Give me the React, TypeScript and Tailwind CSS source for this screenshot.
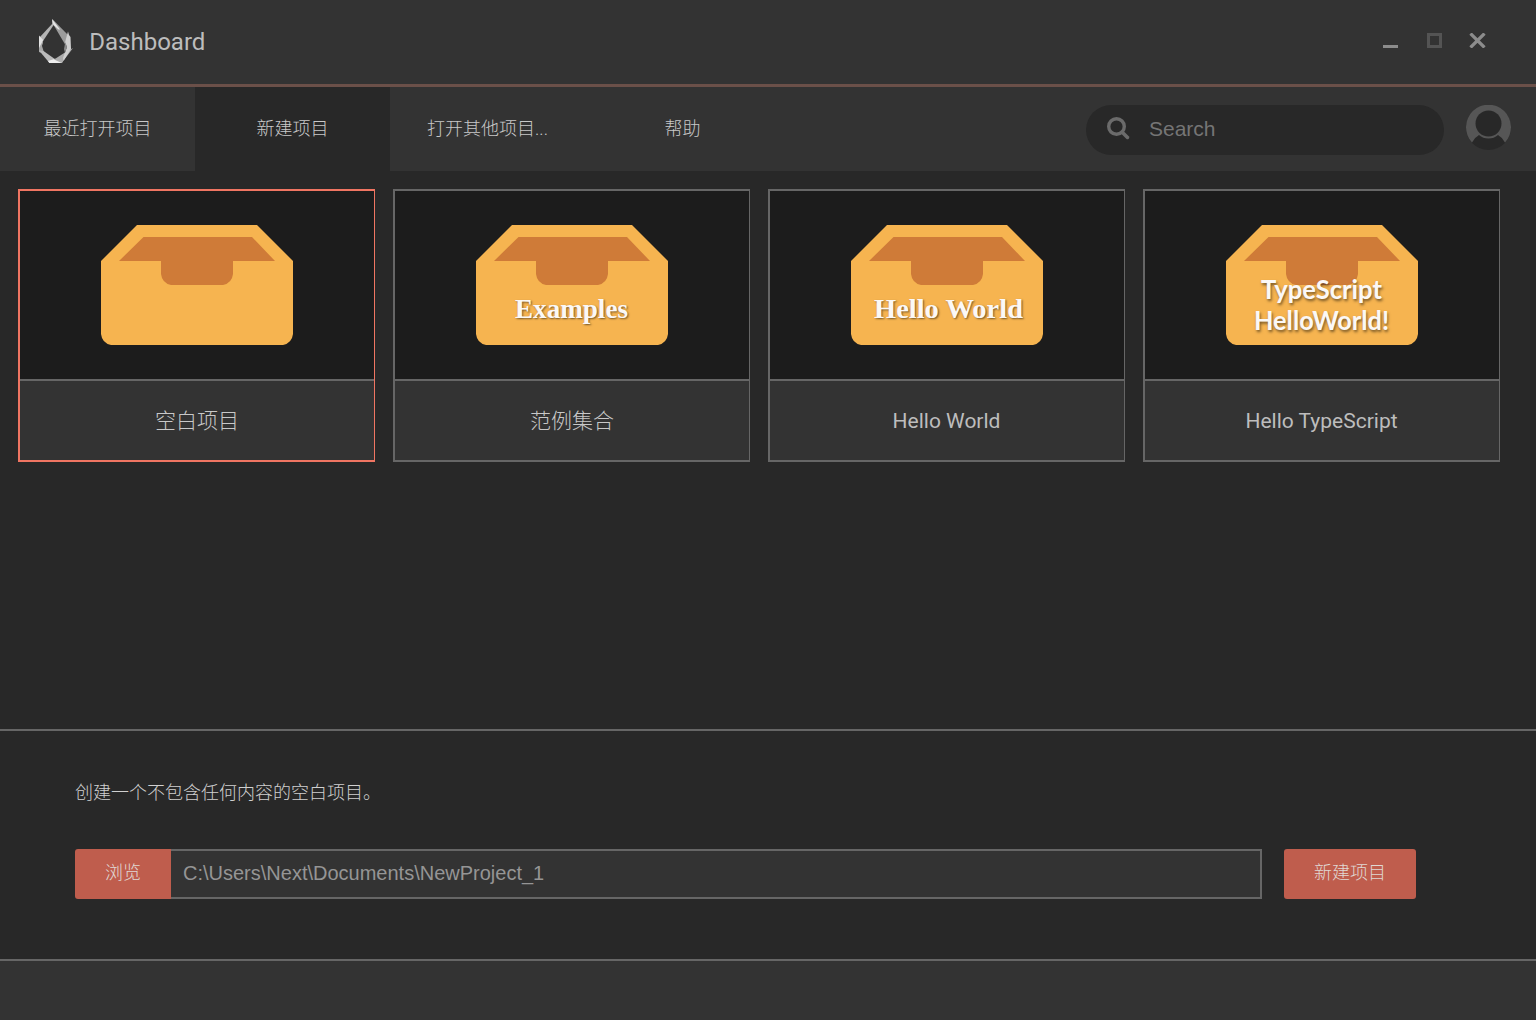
import React from "react";

type Line = { text: string; x: number; y: number; width: number };
type Template = { name: string; serif?: boolean; lines: Line[]; selected?: boolean; cjk?: boolean };

const templates: Template[] = [
  { name: "空白项目", lines: [], selected: true, cjk: true },
  { name: "范例集合", serif: true, lines: [{ text: "Examples", x: 39, y: 93, width: 113 }], cjk: true },
  { name: "Hello World", serif: true, lines: [{ text: "Hello World", x: 23, y: 93, width: 149 }] },
  {
    name: "Hello TypeScript",
    lines: [
      { text: "TypeScript", x: 35, y: 74, width: 121 },
      { text: "HelloWorld!", x: 28, y: 105, width: 135 },
    ],
  },
];

const tabs = ["最近打开项目", "新建项目", "打开其他项目...", "帮助"];

function Logo() {
  return (
    <svg className="mt-[18px] ml-[38px] h-[46px] w-9 shrink-0" viewBox="0 0 36 46">
      <path d="M14.300 1L30.500 17.500L31 24L28 28L15 6Z" fill="#9c9c9c" />
      <path d="M14 1L22 11.500L20.500 11.500L14.500 6Z" fill="#e6e6e6" />
      <path d="M15 5L15.300 7.500L5 23L1 22V20Z" fill="#b4b4b4" />
      <path d="M1 17.500L5.200 22L3.500 29L1 34Z" fill="#e2e2e2" />
      <path d="M5.200 22L4 28L6.500 36L1 34V30Z" fill="#a6a6a6" />
      <path d="M1 32.500L5.500 33L17.500 41.500L11.500 45Z" fill="#bababa" />
      <path d="M10 43L17 40.800L25 43.500L23.700 45H11.300Z" fill="#ededed" />
      <path d="M16 41.500L27 34.500L35 30L23.700 45Z" fill="#acacac" />
      <path d="M30 13.500L31 17L32.500 19L33 31L25.500 43L25 40L29 29L27 24.500Z" fill="#d0d0d0" />
      <path d="M27.300 24L29 29L27 35L26 31Z" fill="#8c8c8c" />
    </svg>
  );
}

function Tray({ template }: { template: Template }) {
  return (
    <svg className="h-[120px] w-48" viewBox="0 0 192 120">
      <path d="M36 0H156L192 36V109Q191 118 182 120H10Q1 118 0 109V36Z" fill="#f6b450" />
      <path d="M42.500 12H151L174 36H132V49Q131 58 122 60H70Q61 58 60 49V36H18Z" fill="#cf7b38" />
      {template.lines.map((l) => (
        <text
          key={l.text}
          x={l.x}
          y={l.y}
          textLength={l.width}
          lengthAdjust="spacingAndGlyphs"
          fill="#fbf8f6"
          className={
            template.serif
              ? "font-['Liberation_Serif'] text-[28px] font-bold [text-shadow:1px_1px_2px_#0008]"
              : "font-[Lato] text-[27px] font-bold [text-shadow:1px_2px_3px_#0008]"
          }
        >
          {l.text}
        </text>
      ))}
    </svg>
  );
}

export default function App() {
  return (
    <div className="flex h-[1020px] w-[1536px] flex-col overflow-hidden bg-[#282828] font-[Roboto,'Noto_Sans_CJK_SC',sans-serif] text-[#bdbdbd]">
      <header className="flex h-[87px] shrink-0 border-b-[3px] border-[#6b5049] bg-[#333]">
        <Logo />
        <h1 className="ml-[15.250px] pt-[24px] text-2xl leading-9">Dashboard</h1>
        <div className="mr-[50px] ml-auto flex pt-[33px]">
          <svg className="h-[15px] w-[104px]" viewBox="0 0 104 15">
            <path d="M1 12H16V15H1Z" fill="#8c8c8c" />
            <path d="M46.500 1.500H58.500V13.500H46.500Z" fill="none" stroke="#545454" strokeWidth="3" />
            <path d="M88.500 0.500L102.500 14.500M102.500 0.500L88.500 14.500" stroke="#8c8c8c" strokeWidth="3.200" />
          </svg>
        </div>
      </header>

      <nav className="flex h-[84px] shrink-0 bg-[#333]">
        {tabs.map((tab, i) => (
          <button
            key={tab}
            className={
              i === 1
                ? "w-[195px] bg-[#282828] pb-0.5 text-[18px] font-light text-[#c8c8c8]"
                : "w-[195px] pb-0.5 text-[18px] font-light text-[#c8c8c8]"
            }
          >
            {tab}
          </button>
        ))}
        <label className="mt-[18px] mr-[22px] ml-auto flex h-[50px] w-[358px] items-center rounded-full bg-[#282828]">
          <svg className="mt-[-4px] ml-[21px] size-[23px]" viewBox="0 0 23 23" fill="none" stroke="#6b6b6b">
            <circle cx="9.500" cy="9.500" r="7.800" strokeWidth="3.400" />
            <path d="M15 15L20.500 20.500" strokeWidth="3.500" strokeLinecap="round" />
          </svg>
          <span className="ml-[19px] pb-0.5 font-['Liberation_Sans'] text-[21px] text-[#757575]">Search</span>
        </label>
        <svg className="mt-[18px] mr-[25px] size-[45px]" viewBox="0 0 45 45">
          <circle cx="22.500" cy="22.500" r="22.500" fill="#282828" />
          <path
            d="M6 37.500A22.500 22.500 0 1 1 39 37.500Q36.500 32.500 32 30Q28 33.500 22.500 33.500Q17 33.500 13 30Q8.500 32.500 6 37.500Z"
            fill="#565656"
          />
          <circle cx="22.500" cy="18.500" r="13" fill="#282828" />
        </svg>
      </nav>

      <main className="flex h-[558px] shrink-0 gap-[18px] pt-[18px] pl-[18px]">
        {templates.map((t) => (
          <article
            key={t.name}
            className={
              t.selected
                ? "flex h-[273px] w-[357px] flex-col border-2 border-r border-[#f07562] bg-[#333]"
                : "flex h-[273px] w-[357px] flex-col border-2 border-r border-[#666] bg-[#333]"
            }
          >
            <div className="flex h-[190px] shrink-0 justify-center border-b-2 border-[#666] bg-[#1c1c1c] pt-[34px]">
              <Tray template={t} />
            </div>
            <h2
              className={
                t.cjk
                  ? "flex grow items-center justify-center pt-0.5 text-[21px] font-light text-[#c8c8c8]"
                  : "flex grow items-center justify-center pt-0.5 pr-px text-[21px]"
              }
            >
              {t.name}
            </h2>
          </article>
        ))}
      </main>

      <section className="h-[230px] shrink-0 border-t-2 border-[#666] pl-[75px]">
        <p className="pt-[48px] text-[18px] leading-7 font-light text-[#d0d0d0]">创建一个不包含任何内容的空白项目。</p>
        <div className="mt-[42px] flex h-[50px]">
          <button className="w-24 rounded-l-[3px] bg-[#bf5d4d] pb-1 text-[18px] font-light text-[#e0d8d4]">浏览</button>
          <div className="flex w-[1091px] items-center border-2 border-l-0 border-[#666] bg-[#333] pb-0.5 pl-3 font-['Liberation_Sans'] text-[20px] text-[#959595]">
            C:\Users\Next\Documents\NewProject_1
          </div>
          <button className="ml-[22px] w-[132px] rounded-[3px] bg-[#bf5d4d] pb-1 text-[18px] font-light text-[#e0d8d4]">
            新建项目
          </button>
        </div>
      </section>

      <footer className="grow border-t-2 border-[#666] bg-[#333]" />
    </div>
  );
}
